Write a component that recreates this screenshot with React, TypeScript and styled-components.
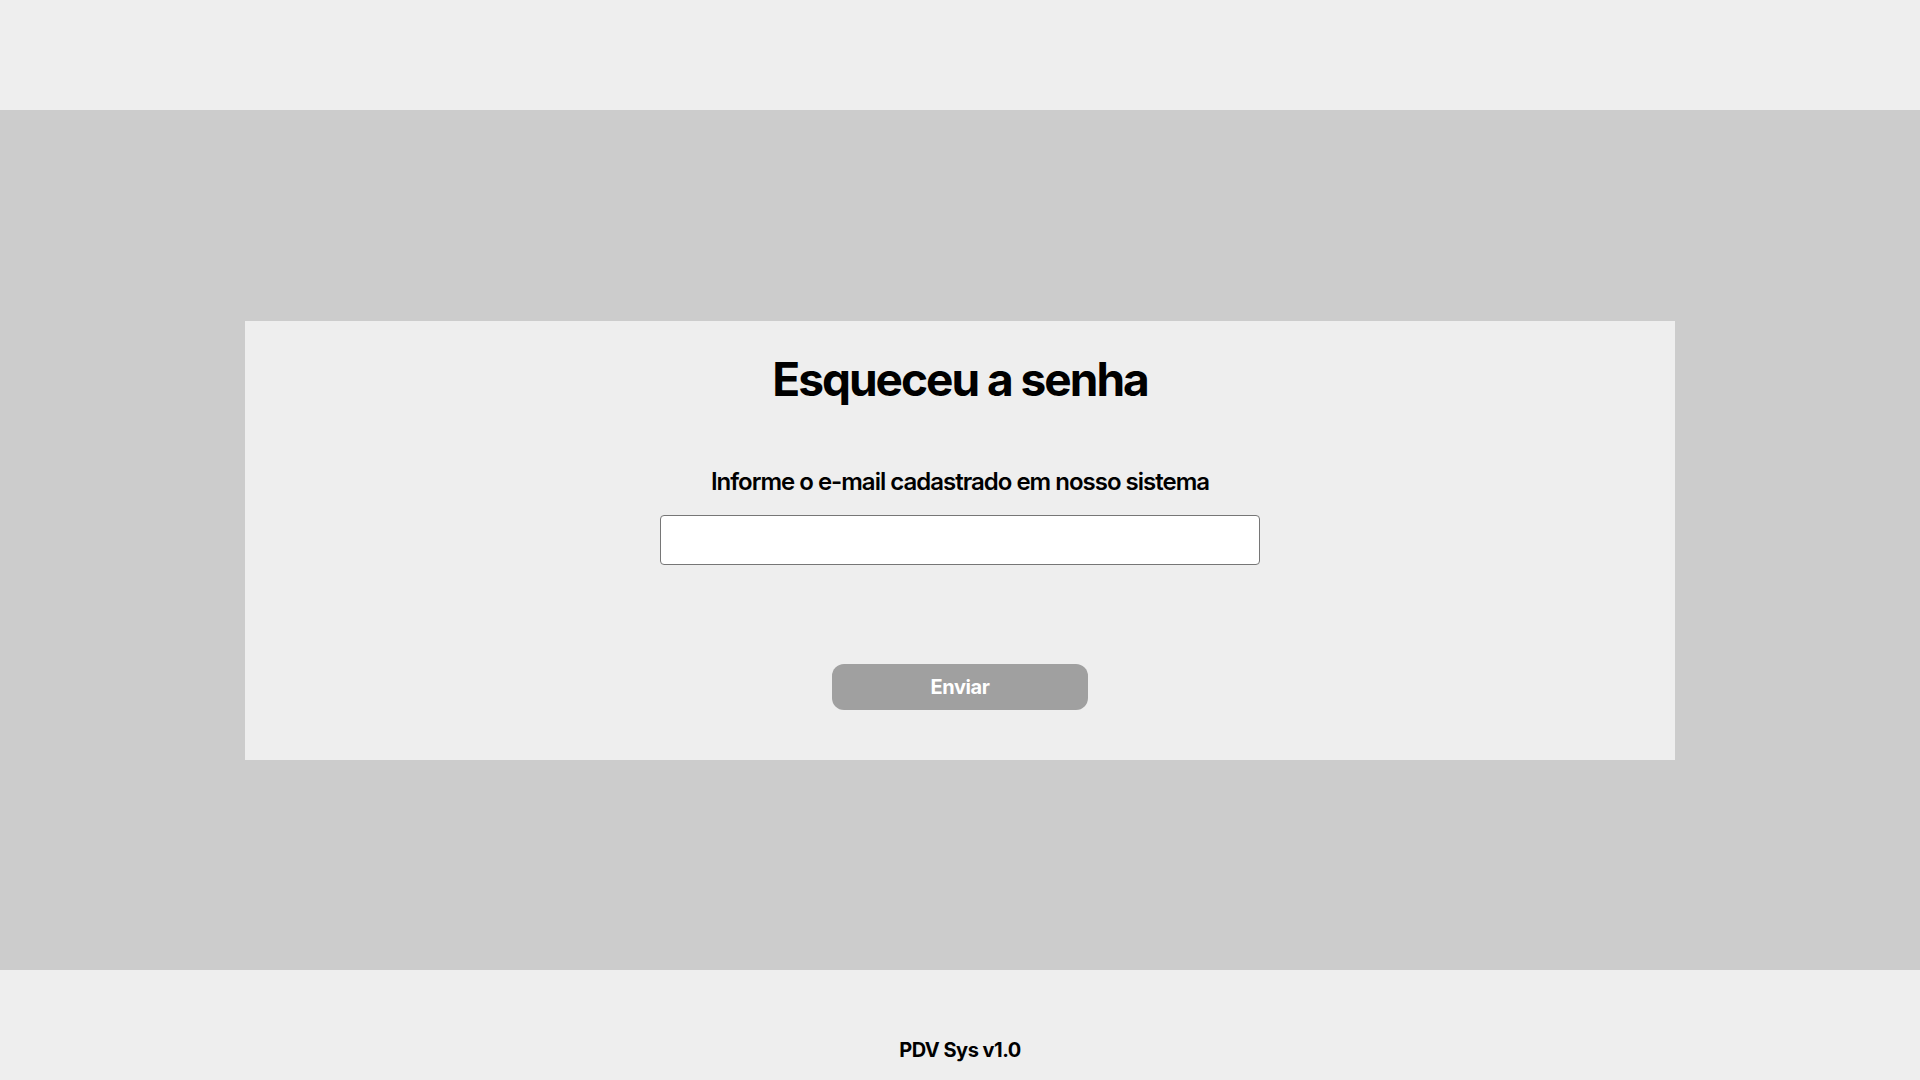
import React from "react";
import styled, { createGlobalStyle } from "styled-components";

const Global = createGlobalStyle`
  html, body { margin: 0; padding: 0; }
  body { font-family: Inter, "Noto Sans", sans-serif; background: #eeeeee; color: #000; }
  * { box-sizing: border-box; }
`;

const Page = styled.div`
  display: flex;
  flex-direction: column;
  width: 100%;
  height: 1080px;
`;

const Header = styled.header`
  height: 110px;
  background: #eeeeee;
`;

const Main = styled.main`
  height: 860px;
  background: #cccccc;
  display: flex;
  align-items: center;
  justify-content: center;
`;

const Card = styled.form`
  width: 1430px;
  background: #eeeeee;
  display: flex;
  flex-direction: column;
  align-items: center;
  padding: 30px 0 50px;
`;

const Title = styled.h1`
  margin: 0;
  font-size: 46px;
  font-weight: 700;
  letter-spacing: -2px;
  line-height: 56px;
`;

const Label = styled.label`
  margin-top: 60px;
  font-size: 24px;
  font-weight: 600;
  letter-spacing: -1px;
  line-height: 29px;
`;

const Input = styled.input`
  margin-top: 19px;
  width: 600px;
  height: 50px;
  border: 1px solid #767676;
  border-radius: 4px;
  background: #fff;
  font-size: 18px;
  padding: 0 10px;
`;

const Button = styled.button`
  margin-top: 99px;
  width: 256px;
  height: 46px;
  border: none;
  border-radius: 12px;
  background: #a0a0a0;
  color: #fff;
  font-family: Inter, sans-serif;
  font-size: 20px;
  font-weight: 700;
  letter-spacing: -0.4px;
  padding-top: 2px;
`;

const Footer = styled.footer`
  height: 110px;
  background: #eeeeee;
  display: flex;
  align-items: flex-end;
  justify-content: center;
  padding-bottom: 18px;
`;

const FooterText = styled.span`
  font-size: 20px;
  font-weight: 700;
  letter-spacing: -0.5px;
  line-height: 24px;
`;

export default function App() {
  return (
    <>
      <Global />
      <Page>
        <Header />
        <Main>
          <Card onSubmit={(e) => e.preventDefault()}>
            <Title>Esqueceu a senha</Title>
            <Label htmlFor="email">Informe o e-mail cadastrado em nosso sistema</Label>
            <Input id="email" type="email" />
            <Button type="submit">Enviar</Button>
          </Card>
        </Main>
        <Footer>
          <FooterText>PDV Sys v1.0</FooterText>
        </Footer>
      </Page>
    </>
  );
}
